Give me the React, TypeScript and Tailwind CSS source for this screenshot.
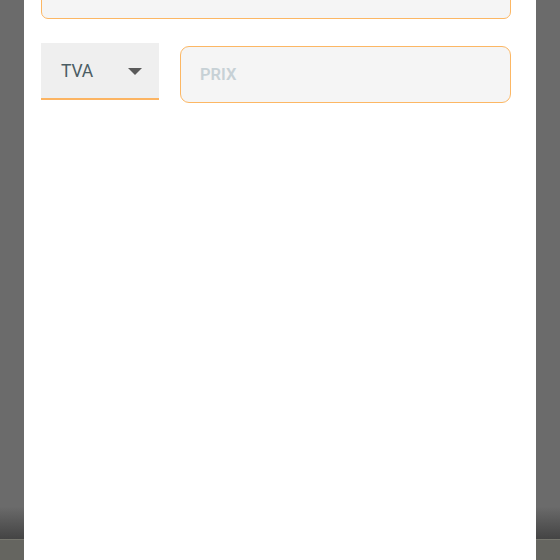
export default function App() {
  return (
    <div className="relative w-[560px] h-[560px] overflow-hidden bg-[#6b6b6b] flex flex-col" style={{ fontFamily: 'Roboto, "Liberation Sans", sans-serif' }}>
      {/* backdrop behind the modal */}
      <div className="flex-1 bg-gradient-to-b from-[#6b6b6b] from-[94%] to-[#444444]"></div>
      <div className="h-[21px] bg-[#656560] border-t border-[#77776f]"></div>

      {/* modal sheet */}
      <div className="absolute left-[24px] top-0 w-[512px] h-[560px] bg-white pl-[17px] pr-[25px] flex flex-col">
        <div className="-mt-[38px] h-[57px] rounded-[7px] border border-[#fcb764] bg-[#f5f5f5]"></div>

        <div className="mt-[24px] flex items-start gap-[21px]">
          <div className="w-[118px] h-[57px] bg-[#efefef] border-b-2 border-[#fcb462] flex items-center justify-between pl-[20px] pr-[17px] pt-[2px]">
            <span className="text-[17.5px] text-[#4b5d64] tracking-[-0.2px]">TVA</span>
            <svg width="14" height="7" viewBox="0 0 14 7" className="mt-[-1px]">
              <polygon points="0,0 14,0 7,7" fill="#5a5a5a" />
            </svg>
          </div>

          <div className="mt-[3px] flex-1 h-[57px] rounded-[9px] border border-[#fcb764] bg-[#f5f5f5] flex items-center pl-[19px] pt-[2px]">
            <span className="text-[16.5px] font-semibold text-[#c7d1d6]">PRIX</span>
          </div>
        </div>
      </div>
    </div>
  )
}
